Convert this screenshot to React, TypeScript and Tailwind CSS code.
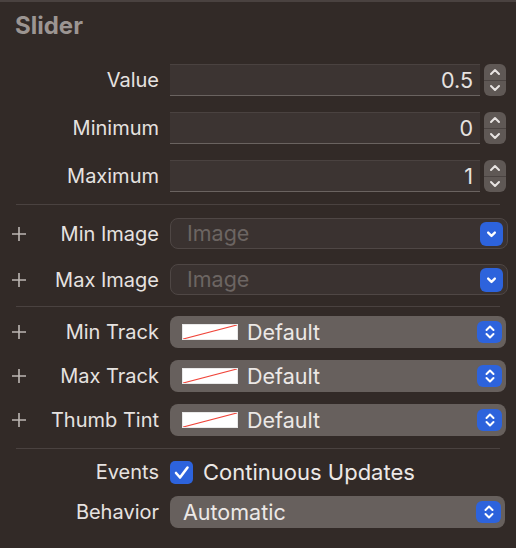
import React from "react";

const font = { fontFamily: "Inter, 'Noto Sans', sans-serif" };

// 上下箭头
const Stepper = () => (
  <div className="w-[22px] h-[32px] rounded-[6px] bg-[#5f5855] flex flex-col items-center justify-between">
    <svg width="22" height="16" viewBox="0 0 22 16">
      <path d="M7 10 L11 6 L15 10" stroke="#e8e4e2" strokeWidth="2" fill="none" strokeLinecap="round" strokeLinejoin="round" />
    </svg>
    <div className="w-full h-px bg-[#4a4341]" />
    <svg width="22" height="15" viewBox="0 0 22 15">
      <path d="M7 5 L11 9 L15 5" stroke="#e8e4e2" strokeWidth="2" fill="none" strokeLinecap="round" strokeLinejoin="round" />
    </svg>
  </div>
);

const Chevron = ({ double }: { double?: boolean }) => (
  <svg width="24" height="22" viewBox="0 0 24 22">
    {double ? (
      <>
        <path d="M8.5 9 L12 5.5 L15.5 9" stroke="#fff" strokeWidth="2" fill="none" strokeLinecap="round" strokeLinejoin="round" />
        <path d="M8.5 13 L12 16.5 L15.5 13" stroke="#fff" strokeWidth="2" fill="none" strokeLinecap="round" strokeLinejoin="round" />
      </>
    ) : (
      <path d="M8.5 9.5 L12 13 L15.5 9.5" stroke="#fff" strokeWidth="2.4" fill="none" strokeLinecap="round" strokeLinejoin="round" />
    )}
  </svg>
);

const Label = ({ text, plus }: { text: string; plus?: boolean }) => (
  <div className="w-[160px] shrink-0 flex items-center pr-[1px]">
    <div className="w-[38px] flex justify-center">
      {plus ? (
        <svg width="16" height="16" viewBox="0 0 16 16">
          <path d="M8 1 V15 M1 8 H15" stroke="#bdb7b4" strokeWidth="1.6" />
        </svg>
      ) : null}
    </div>
    <span className="flex-1 text-right text-[20px] text-[#e6e2e0] whitespace-nowrap">{text}</span>
  </div>
);

const NumberRow = ({ label, value }: { label: string; value: string }) => (
  <div className="flex items-center h-[32px]">
    <Label text={label} />
    <div className="ml-[10px] w-[310px] h-[32px] bg-[#3c3432] border-t border-[#4a4240] border-b border-b-[#6a6360] flex items-center justify-end pr-[7px] text-[21.5px] text-[#e6e2e0]">
      {value}
    </div>
    <div className="ml-[4px]">
      <Stepper />
    </div>
  </div>
);

const ImageRow = ({ label }: { label: string }) => (
  <div className="flex items-center h-[31px]">
    <Label text={label} plus />
    <div className="ml-[10px] w-[338px] h-[31px] rounded-[8px] border border-[#4f4745] bg-[#3a3230] flex items-center justify-between pl-[16px] pr-[4px]">
      <span className="text-[21.5px] text-[#6c6562]">Image</span>
      <div className="w-[23px] h-[24px] rounded-[6px] bg-[#2d63dc] flex items-center justify-center">
        <Chevron />
      </div>
    </div>
  </div>
);

const Swatch = () => (
  <div className="w-[56px] h-[16px] bg-[#e9e9e9] p-[1px]">
    <svg width="54" height="14" viewBox="0 0 54 14" className="bg-white block">
      <line x1="0" y1="14" x2="54" y2="0" stroke="#f0453a" strokeWidth="1.2" />
    </svg>
  </div>
);

const ColorRow = ({ label }: { label: string }) => (
  <div className="flex items-center h-[32px]">
    <Label text={label} plus />
    <div className="ml-[10px] w-[336px] h-[32px] rounded-[8px] bg-[#67605d] flex items-center pl-[12px] pr-[4px]">
      <Swatch />
      <span className="ml-[9px] flex-1 text-[21.5px] text-[#ece8e6]">Default</span>
      <div className="w-[25px] h-[22px] rounded-[6px] bg-[#2d63dc] flex items-center justify-center">
        <Chevron double />
      </div>
    </div>
  </div>
);

const Divider = () => <div className="mx-[16px] h-px bg-[#4a4240]" />;

export default function App() {
  return (
    <div className="w-[516px] h-[548px] bg-[#322a27] border-t-2 border-[#4a4240] overflow-hidden" style={font}>
      <div className="h-[62px] pl-[15px] pt-[6px]">
        <span className="text-[24px] font-bold text-[#9c9592]">Slider</span>
      </div>
      <div className="flex flex-col gap-[16px]">
        <NumberRow label="Value" value="0.5" />
        <NumberRow label="Minimum" value="0" />
        <NumberRow label="Maximum" value="1" />
      </div>
      <div className="mt-[12px] mb-[13px]">
        <Divider />
      </div>
      <div className="flex flex-col gap-[15px]">
        <ImageRow label="Min Image" />
        <ImageRow label="Max Image" />
      </div>
      <div className="mt-[11px] mb-[9px]">
        <Divider />
      </div>
      <div className="flex flex-col gap-[12px]">
        <ColorRow label="Min Track" />
        <ColorRow label="Max Track" />
        <ColorRow label="Thumb Tint" />
      </div>
      <div className="mt-[12px] mb-[9px]">
        <Divider />
      </div>
      <div className="flex items-center h-[28px]">
        <Label text="Events" />
        <div className="ml-[10px] w-[23px] h-[23px] rounded-[5px] bg-[#2d63dc] flex items-center justify-center">
          <svg width="17" height="17" viewBox="0 0 17 17">
            <path d="M3 9 L7 13.5 L14.5 3.5" stroke="#fff" strokeWidth="2.6" fill="none" strokeLinecap="round" strokeLinejoin="round" />
          </svg>
        </div>
        <span className="ml-[10px] text-[22px] text-[#ece8e6] whitespace-nowrap">Continuous Updates</span>
      </div>
      <div className="flex items-center h-[32px] mt-[10px]">
        <Label text="Behavior" />
        <div className="ml-[10px] w-[335px] h-[32px] rounded-[8px] bg-[#67605d] flex items-center pl-[13px] pr-[4px]">
          <span className="flex-1 text-[21.5px] text-[#ece8e6]">Automatic</span>
          <div className="w-[25px] h-[22px] rounded-[6px] bg-[#2d63dc] flex items-center justify-center">
            <Chevron double />
          </div>
        </div>
      </div>
    </div>
  );
}
